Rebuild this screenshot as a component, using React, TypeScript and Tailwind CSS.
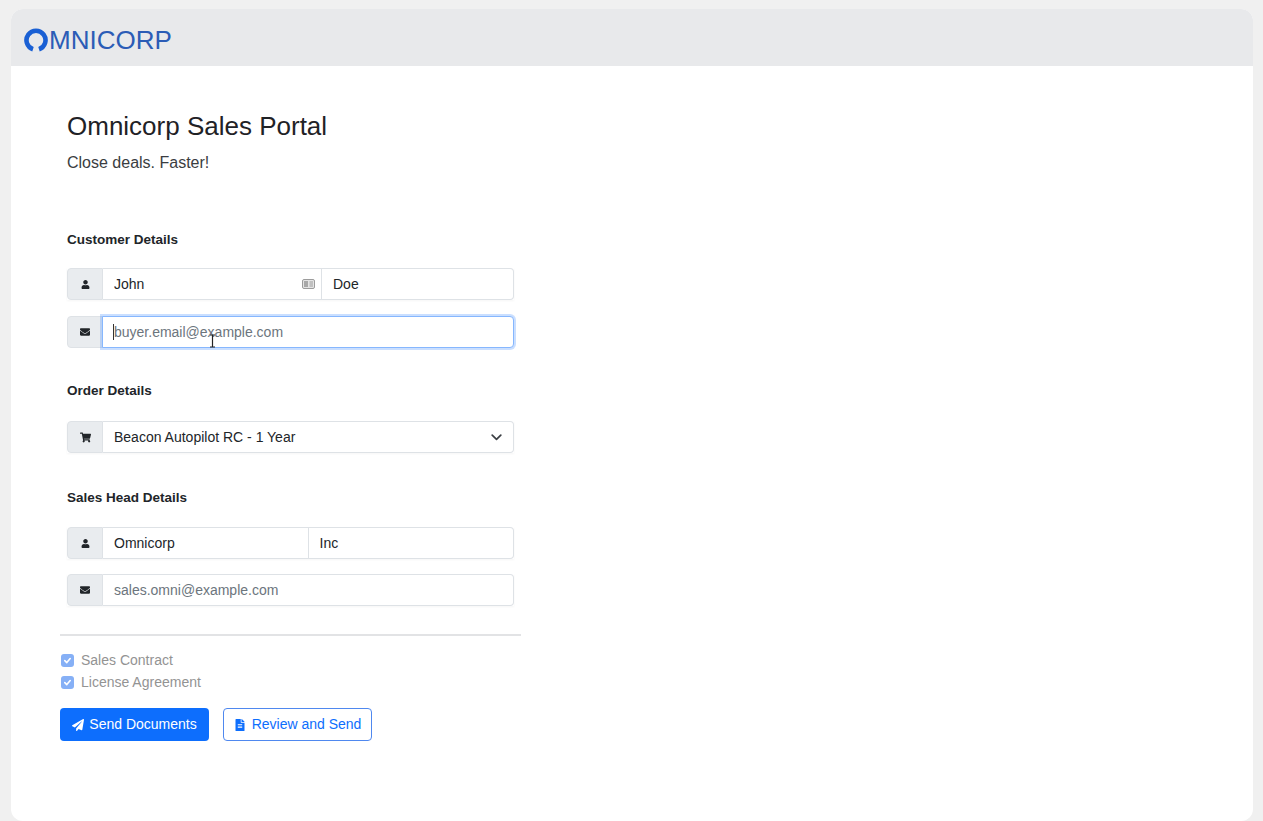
import React from "react";
import { FaUser, FaEnvelope, FaShoppingCart, FaPaperPlane, FaFileAlt } from "react-icons/fa";

function Addon({ children }: { children: React.ReactNode }) {
  return (
    <div className="flex w-[36px] shrink-0 items-center justify-center rounded-l-[4px] border border-[#dee2e6] bg-[#e9ecef] text-[#212529]">
      {children}
    </div>
  );
}

function Label({ children }: { children: React.ReactNode }) {
  return <div className="text-[13.5px] font-semibold leading-[20px] text-[#212529]">{children}</div>;
}

const inputBase =
  "h-full min-w-0 flex-1 bg-white px-[11px] text-[14px] text-[#212529] outline-none placeholder:text-[#6c757d]";

function CardIcon() {
  return (
    <svg width="13" height="10" viewBox="0 0 13 10" className="absolute right-[7px] top-[11px]">
      <rect x="0.5" y="0.5" width="12" height="9" rx="1.5" fill="#e4e4e4" stroke="#9c9c9c" />
      <rect x="2" y="2" width="4" height="6" fill="#a8a8a8" />
      <line x1="7.5" y1="3" x2="11" y2="3" stroke="#9c9c9c" />
      <line x1="7.5" y1="5" x2="11" y2="5" stroke="#9c9c9c" />
      <line x1="7.5" y1="7" x2="11" y2="7" stroke="#9c9c9c" />
    </svg>
  );
}

function Check({ label }: { label: string }) {
  return (
    <div className="flex h-[22px] items-center">
      <div className="ml-[1px] flex h-[13px] w-[13px] items-center justify-center rounded-[3px] bg-[#86b0f6]">
        <svg width="9" height="9" viewBox="0 0 10 10">
          <path d="M2 5.2 L4.2 7.3 L8 2.8" fill="none" stroke="white" strokeWidth="1.8" strokeLinecap="round" strokeLinejoin="round" />
        </svg>
      </div>
      <span className="ml-[7px] text-[14px] text-[#939393]">{label}</span>
    </div>
  );
}

export default function App() {
  return (
    <div className="min-h-screen bg-[#f0f0f0] pl-[11px] pt-[9px] font-['Liberation_Sans',Arial,sans-serif]">
      <div className="h-[812px] w-[1242px] overflow-hidden rounded-[12px] bg-white">
        {/* Header */}
        <div className="flex h-[57px] items-center bg-[#e8e9eb] pl-[13px] pt-[5px]">
          <svg width="24" height="24" viewBox="0 0 24 24">
            <path
              d="M 9.0 21.2 A 9.5 9.5 0 1 1 15.0 21.2"
              fill="none"
              stroke="#1a60d4"
              strokeWidth="4.6"
            />
          </svg>
          <span className="ml-[1px] text-[26px] leading-[26px] text-[#2b5cb6]">MNICORP</span>
        </div>

        {/* Main */}
        <div className="pl-[49px] pt-[44px]">
          <div className="w-[461px]">
            <div className="px-[7px]">
              <h1 className="text-[26px] leading-[32px] text-[#1f2226]">Omnicorp Sales Portal</h1>
              <p className="mt-[9px] text-[16px] leading-[24px] text-[#3a3d41]">Close deals. Faster!</p>

              <div className="mt-[55px]">
                <Label>Customer Details</Label>
              </div>
              <div className="mt-[18px] flex h-[32px] shadow-[0_1px_2px_rgba(0,0,0,0.04)]">
                <Addon>
                  <FaUser size={9} />
                </Addon>
                <div className="relative flex flex-1">
                  <input defaultValue="John" className={`${inputBase} border-y border-r border-[#dee2e6] pr-[26px]`} />
                  <CardIcon />
                </div>
                <input
                  defaultValue="Doe"
                  className={`${inputBase} rounded-r-[4px] border-y border-r border-[#dee2e6]`}
                />
              </div>
              <div className="mt-[16px] flex h-[32px]">
                <Addon>
                  <FaEnvelope size={10} />
                </Addon>
                <div className="relative z-10 -ml-[1px] flex flex-1">
                  <input
                    placeholder="buyer.email@example.com"
                    className={`${inputBase} rounded-r-[4px] border border-[#86b7fe] shadow-[0_0_0_2px_rgba(13,110,253,0.22)]`}
                  />
                  <div className="absolute left-[11px] top-[8px] h-[16px] w-px bg-[#333]" />
                  <svg width="7" height="14" viewBox="0 0 7 14" className="absolute left-[107px] top-[18px]">
                    <path d="M1 1 H6 M3.5 1 V13 M1 13 H6" fill="none" stroke="#222" strokeWidth="1.2" />
                  </svg>
                </div>
              </div>

              <div className="mt-[33px]">
                <Label>Order Details</Label>
              </div>
              <div className="mt-[20px] flex h-[32px] shadow-[0_1px_2px_rgba(0,0,0,0.04)]">
                <Addon>
                  <FaShoppingCart size={11} />
                </Addon>
                <div className="flex flex-1 items-center justify-between rounded-r-[4px] border-y border-r border-[#dee2e6] bg-white pl-[11px] pr-[11px] text-[14px] text-[#212529]">
                  <span>Beacon Autopilot RC - 1 Year</span>
                  <svg width="11" height="7" viewBox="0 0 11 7">
                    <path d="M1.2 1.2 L5.5 5.3 L9.8 1.2" fill="none" stroke="#3b3f44" strokeWidth="1.7" strokeLinecap="round" strokeLinejoin="round" />
                  </svg>
                </div>
              </div>

              <div className="mt-[35px]">
                <Label>Sales Head Details</Label>
              </div>
              <div className="mt-[19px] flex h-[32px] shadow-[0_1px_2px_rgba(0,0,0,0.04)]">
                <Addon>
                  <FaUser size={9} />
                </Addon>
                <input defaultValue="Omnicorp" className={`${inputBase} border-y border-r border-[#dee2e6]`} />
                <input
                  defaultValue="Inc"
                  className={`${inputBase} rounded-r-[4px] border-y border-r border-[#dee2e6]`}
                />
              </div>
              <div className="mt-[15px] flex h-[32px] shadow-[0_1px_2px_rgba(0,0,0,0.04)]">
                <Addon>
                  <FaEnvelope size={10} />
                </Addon>
                <input
                  placeholder="sales.omni@example.com"
                  className={`${inputBase} rounded-r-[4px] border-y border-r border-[#dee2e6]`}
                />
              </div>
            </div>

            <div className="mt-[28px] h-[2px] bg-[#e2e3e5]" />

            <div className="mt-[13px]">
              <Check label="Sales Contract" />
              <Check label="License Agreement" />
            </div>

            <div className="mt-[15px] flex gap-[14px]">
              <button className="flex h-[33px] w-[149px] items-center justify-center gap-[5px] rounded-[4px] bg-[#0d6efd] text-[14px] text-white">
                <FaPaperPlane size={12} />
                <span>Send Documents</span>
              </button>
              <button className="flex h-[33px] w-[149px] items-center justify-center gap-[6px] rounded-[4px] border border-[#4f88ef] bg-white text-[14px] text-[#0d6efd]">
                <FaFileAlt size={12} />
                <span>Review and Send</span>
              </button>
            </div>
          </div>
        </div>
      </div>
    </div>
  );
}
